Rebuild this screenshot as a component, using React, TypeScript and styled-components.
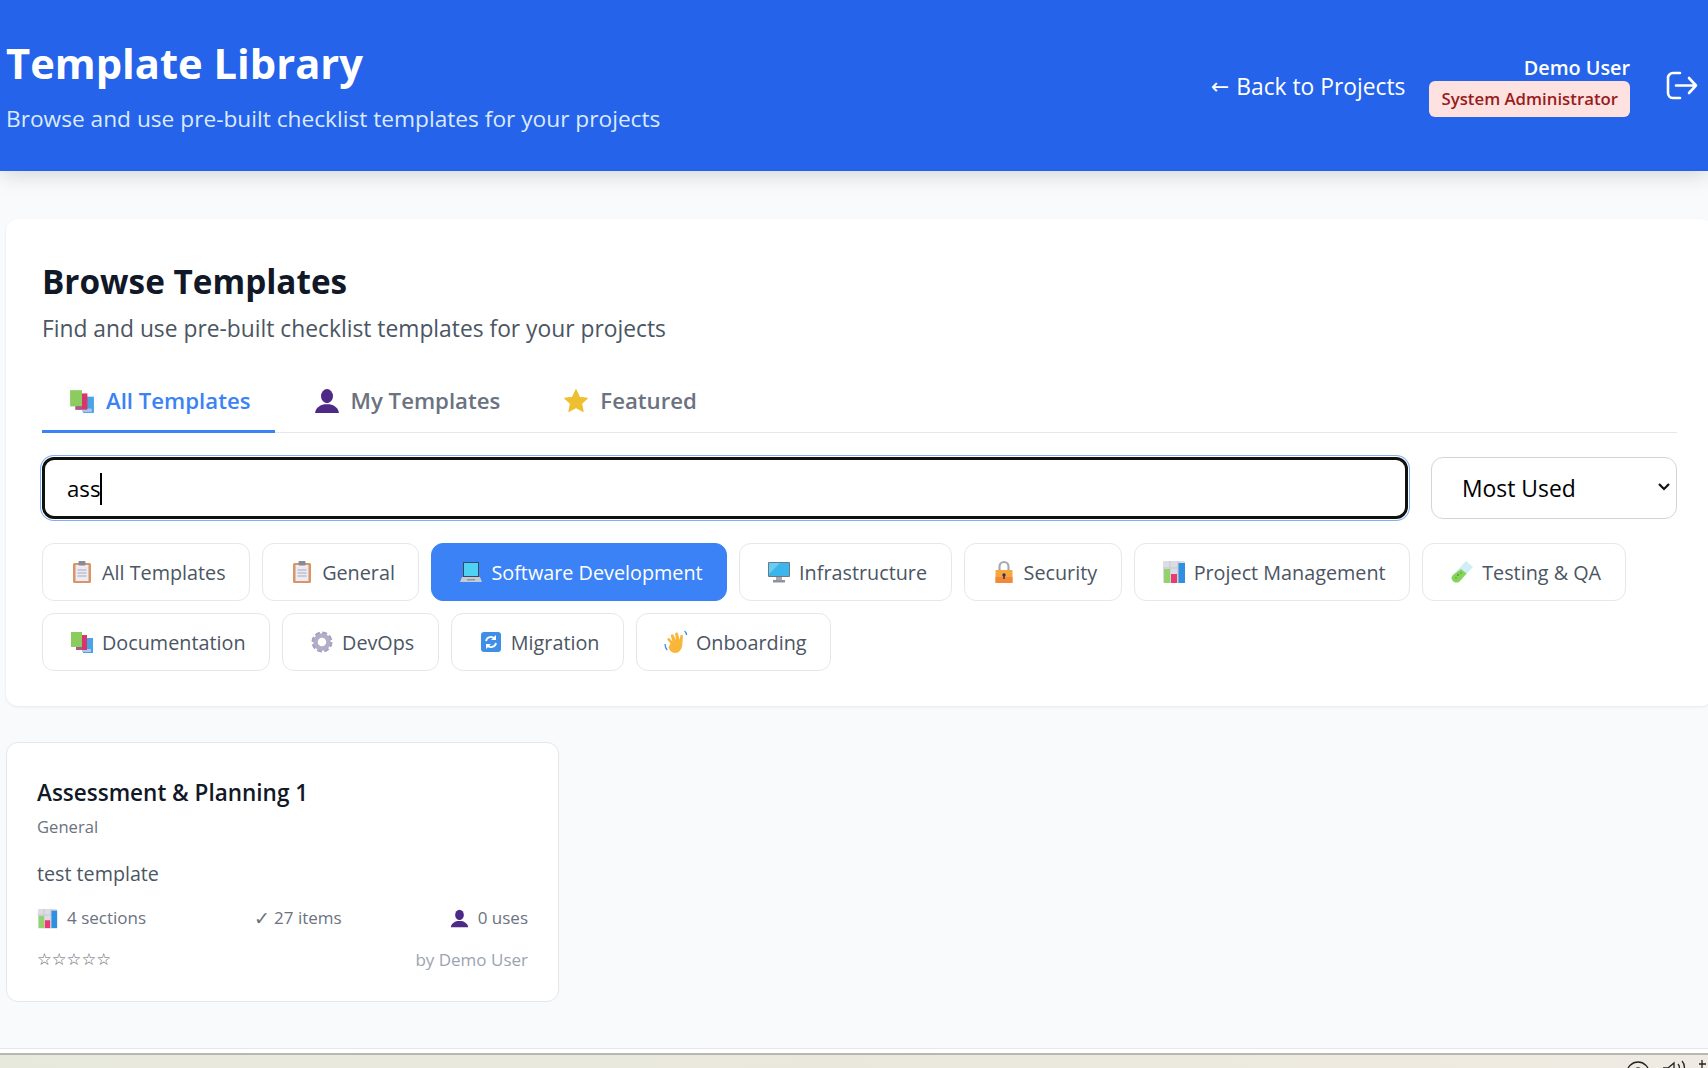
import { createGlobalStyle, styled } from "styled-components";

const sans = `"Open Sans", "Liberation Sans", sans-serif`;

const Global = createGlobalStyle`
  html, body {
    margin: 0;
    padding: 0;
    overflow: hidden;
    background: #f9fafb;
    font-family: ${sans};
  }
  * { box-sizing: border-box; }
`;

type EmojiName =
  | "books"
  | "bust"
  | "star"
  | "clipboard"
  | "laptop"
  | "desktop"
  | "lock"
  | "chart"
  | "tube"
  | "gear"
  | "refresh"
  | "wave";

const Emoji = ({ name, size = 24 }: { name: EmojiName; size?: number }) => {
  const art: Record<EmojiName, React.ReactNode> = {
    books: (
      <>
        <rect x="13" y="8" width="10" height="15" fill="#4aa3e8" />
        <rect x="12" y="19" width="9" height="3" fill="#a9c9ee" />
        <rect x="6" y="5" width="11" height="15" fill="#d9356b" />
        <rect x="1" y="2" width="11" height="15" fill="#8ccb5e" />
        <rect x="6" y="17" width="6" height="3" fill="#a45a8c" />
      </>
    ),
    bust: (
      <>
        <ellipse cx="12" cy="7.500" rx="5.500" ry="6.500" fill="#4c2a85" />
        <path d="M1 23c.5-4.500 4-7 8.500-8h5c4.500 1 8 3.500 8.500 8z" fill="#4c2a85" />
      </>
    ),
    star: (
      <path
        d="M12 1.500l3.200 7 7.300.9-5.400 5 1.500 7.300L12 18l-6.600 3.700 1.500-7.300-5.400-5 7.300-.9z"
        fill="#eebf2f"
        stroke="#eebf2f"
        strokeLinejoin="round"
      />
    ),
    clipboard: (
      <>
        <rect x="3" y="3" width="18" height="20" rx="1.500" fill="#d99566" />
        <rect x="5.500" y="5" width="13" height="16" fill="#eceaf2" />
        <rect x="8.500" y="1" width="7" height="4.500" rx="1" fill="#8a8a94" />
        <path d="M7.500 10h9M7.500 13h9M7.500 16h9" stroke="#a9a9b6" strokeWidth="1" />
      </>
    ),
    laptop: (
      <>
        <rect x="4" y="2" width="16" height="15" fill="#3a4a5c" />
        <rect x="5" y="3" width="14" height="13" fill="#4fd0f5" />
        <path d="M3 17h18l2 5H1z" fill="#c5cad4" />
        <rect x="8" y="19" width="8" height="1.500" fill="#8f95a3" />
      </>
    ),
    desktop: (
      <>
        <rect x="1" y="2" width="22" height="15" rx="1" fill="#6f7785" />
        <path d="M2 3h20v13H2z" fill="#3cb4ec" />
        <path d="M2 3h11L2 14z" fill="#66cdf3" />
        <rect x="9" y="17" width="6" height="3" fill="#a4a9b3" />
        <rect x="6" y="20" width="12" height="2.500" fill="#8e939e" />
      </>
    ),
    lock: (
      <>
        <path d="M7.500 11V6.500a4.500 4.500 0 0 1 9 0V11" fill="none" stroke="#a8a8b0" strokeWidth="2.200" />
        <rect x="3.500" y="10" width="17" height="13" rx="1" fill="#f7a63c" />
        <rect x="3.500" y="17" width="17" height="6" fill="#f08a3c" />
        <circle cx="12" cy="15" r="1.700" fill="#3a3050" />
        <rect x="11.300" y="15" width="1.400" height="4" fill="#3a3050" />
      </>
    ),
    chart: (
      <>
        <rect x="1" y="1" width="22" height="22" rx="1" fill="#dcdce4" />
        <path d="M1 8h22M8 1v22M16 1v22" stroke="#c6c6d0" strokeWidth="1" />
        <rect x="2" y="9" width="6" height="14" fill="#92d36e" />
        <rect x="9" y="14" width="6" height="9" fill="#ea3a72" />
        <rect x="16.500" y="3" width="6.500" height="20" fill="#2f8fe0" />
      </>
    ),
    tube: (
      <>
        <path d="M16 1l7 6L10 21c-2 2-5 2-7 0s-2-4 0-6z" fill="#cfeef5" />
        <path d="M11 9l5.500 4.500L10 21c-2 2-5 2-7 0s-2-4 0-6z" fill="#86d35a" />
        <circle cx="8" cy="15" r="1" fill="#4e9e33" />
        <circle cx="11" cy="13" r=".8" fill="#4e9e33" />
        <circle cx="6" cy="18" r=".8" fill="#4e9e33" />
      </>
    ),
    gear: (
      <>
        <circle
          cx="12"
          cy="12"
          r="8"
          fill="none"
          stroke="#a79fc0"
          strokeWidth="5"
          strokeDasharray="4.200 2.080"
        />
        <circle cx="12" cy="12" r="6.500" fill="none" stroke="#b3acc9" strokeWidth="4.500" />
      </>
    ),
    refresh: (
      <>
        <rect x="2" y="2" width="20" height="20" rx="3" fill="#3f8fe6" />
        <path
          d="M7 11a5 5 0 0 1 9-2M17 13a5 5 0 0 1-9 2"
          fill="none"
          stroke="#fff"
          strokeWidth="1.800"
        />
        <path d="M17 5v5h-5zM7 19v-5h5z" fill="#fff" />
      </>
    ),
    wave: (
      <>
        <path
          d="M6.500 13.500l-2.800-3.300c-1.200-1.600 1-3 2.300-1.500L8.500 11.500 6.800 6c-.5-1.700 1.800-2.600 2.700-.9L12 10l-.8-6c0-1.900 2.500-2 2.900-.2l1.300 6 1-4c.5-1.700 2.700-1.300 2.500.5l-.6 8.700c-.5 4.500-3.300 8-7.300 8-3.300 0-5-2.200-6.500-5.500z"
          fill="#f8b73a"
        />
        <path d="M1 14c0 2.500.6 4.300 2.200 6M20.500 1c1.200 1 2 2.400 2 4" fill="none" stroke="#3f8fe6" strokeWidth="1.300" />
      </>
    ),
  };
  return (
    <svg width={size} height={size} viewBox="0 0 24 24" aria-hidden="true">
      {art[name]}
    </svg>
  );
};

const Page = styled.div`
  display: flex;
  flex-direction: column;
  width: 1708px;
  height: 1068px;
  overflow: hidden;
  background: #f9fafb;
`;

const Header = styled.header`
  flex: none;
  height: 171px;
  display: flex;
  align-items: center;
  justify-content: space-between;
  padding: 0 10px 0 6px;
  background: #2563eb;
  color: #fff;
  box-shadow: 0 4px 20px rgba(0, 0, 0, 0.15);
  position: relative;
`;

const TitleBlock = styled.div`
  display: flex;
  flex-direction: column;
  padding-top: 1px;
`;

const PageTitle = styled.h1`
  margin: 0 0 15px;
  font-size: 41.7px;
  line-height: 50px;
  font-weight: 700;
`;

const PageSubtitle = styled.p`
  margin: 0;
  font-size: 22.7px;
  line-height: 32px;
  color: #dbeafe;
`;

const HeaderRight = styled.div`
  display: flex;
  align-items: center;
`;

const BackLink = styled.a`
  display: flex;
  align-items: center;
  gap: 7px;
  margin-right: 24px;
  padding-top: 2px;
  font-size: 22.8px;
  color: #fff;
`;

const ArrowGlyph = styled.span`
  font-family: "DejaVu Sans", sans-serif;
  font-size: 22px;
`;

const UserInfo = styled.div`
  display: flex;
  flex-direction: column;
  align-items: flex-end;
`;

const UserName = styled.span`
  font-size: 19.8px;
  line-height: 26px;
  font-weight: 600;
`;

const RoleBadge = styled.span`
  padding: 0 12px;
  height: 36px;
  line-height: 36px;
  border-radius: 6px;
  background: #fee2e2;
  color: #991b1b;
  font-size: 16.8px;
  font-weight: 600;
`;

const LogoutButton = styled.button`
  display: flex;
  margin-left: 36px;
  padding: 0;
  border: 0;
  background: none;
  color: #fff;
`;

const Main = styled.main`
  flex: 1;
  padding: 48px 0 0 6px;
`;

const BrowseCard = styled.section`
  width: 1707px;
  height: 487px;
  padding: 36px 36px 0;
  background: #fff;
  border-radius: 12px;
  box-shadow: 0 1px 3px rgba(0, 0, 0, 0.08);
`;

const BrowseTitle = styled.h2`
  margin: 0;
  font-size: 33.3px;
  line-height: 52px;
  font-weight: 700;
  color: #111827;
`;

const BrowseSubtitle = styled.p`
  margin: 0;
  font-size: 22.8px;
  line-height: 44px;
  color: #4b5563;
`;

const Tabs = styled.nav`
  display: flex;
  gap: 12px;
  margin-top: 22px;
  border-bottom: 1px solid #e5e7eb;
`;

const Tab = styled.button<{ $active?: boolean }>`
  display: flex;
  align-items: center;
  gap: 11px;
  height: 60px;
  margin-bottom: -1px;
  padding: 0 24px 2px 27px;
  border: 0;
  border-bottom: 3px solid ${(p) => (p.$active ? "#3b82f6" : "transparent")};
  background: none;
  font-family: inherit;
  font-size: 22.2px;
  font-weight: 600;
  color: ${(p) => (p.$active ? "#3b82f6" : "#6b7280")};
`;

const SearchRow = styled.div`
  display: flex;
  gap: 23px;
  margin-top: 24px;
`;

const SearchBox = styled.div`
  flex: 1;
  display: flex;
  align-items: center;
  height: 62px;
  padding: 1px 22px 0;
  background: #fff;
  border: 3px solid #101010;
  border-radius: 12px;
  box-shadow: 0 0 0 1px #fff, 0 0 0 2px #7fb0f5;
  font-size: 22.2px;
  color: #000;
`;

const Caret = styled.span`
  width: 2px;
  height: 32px;
  background: #000;
`;

const SortWrap = styled.div`
  position: relative;
  width: 246px;
  height: 62px;
`;

const SortSelect = styled.select`
  width: 100%;
  height: 100%;
  padding: 1px 26px 0 30px;
  appearance: none;
  background: #fff;
  border: 1.5px solid #d1d5db;
  border-radius: 12px;
  font-family: inherit;
  font-size: 22.9px;
  color: #000;
`;

const SortChevron = styled.svg`
  position: absolute;
  right: 6px;
  top: 25px;
  pointer-events: none;
`;

const Pills = styled.div`
  display: flex;
  flex-wrap: wrap;
  gap: 12px;
  margin-top: 24px;
`;

const Pill = styled.button<{ $active?: boolean }>`
  display: flex;
  align-items: center;
  gap: 8px;
  height: 58px;
  padding: 0 23.5px 0 27px;
  border: 1.5px solid ${(p) => (p.$active ? "#3b82f6" : "#e5e7eb")};
  border-radius: 12px;
  background: ${(p) => (p.$active ? "#3b82f6" : "#fff")};
  font-family: inherit;
  font-size: 19.8px;
  color: ${(p) => (p.$active ? "#fff" : "#4b5563")};
`;

const TemplateCard = styled.article`
  width: 553px;
  height: 260px;
  margin-top: 36px;
  padding: 34px 30px 0;
  background: #fff;
  border: 1.5px solid #e5e7eb;
  border-radius: 12px;
`;

const CardTitle = styled.h3`
  margin: 0;
  font-size: 22.5px;
  line-height: 32px;
  font-weight: 600;
  color: #111827;
`;

const CardCategory = styled.div`
  margin-top: 5px;
  font-size: 16.6px;
  line-height: 26px;
  color: #6b7280;
`;

const CardDescription = styled.p`
  margin: 19px 0 0;
  font-size: 19.7px;
  line-height: 30px;
  color: #4b5563;
`;

const CardStats = styled.div`
  display: flex;
  justify-content: space-between;
  margin-top: 15px;
  font-size: 17px;
  line-height: 28px;
  color: #6b7280;
`;

const Stat = styled.span`
  display: flex;
  align-items: center;
  gap: 9px;
`;

const CheckGlyph = styled.span`
  font-family: "DejaVu Sans", sans-serif;
  font-size: 19px;
  margin-right: -5px;
`;

const CardFooter = styled.div`
  display: flex;
  justify-content: space-between;
  align-items: center;
  margin-top: 14px;
`;

const Stars = styled.span`
  font-family: "DejaVu Sans", sans-serif;
  font-size: 16.5px;
  line-height: 28px;
  color: #5f6670;
`;

const Author = styled.span`
  font-size: 17px;
  line-height: 28px;
  color: #9ca3af;
`;

const BottomEdge = styled.div`
  flex: none;
  height: 5px;
  background: #fff;
  border-top: 1px solid #e5e7eb;
`;

const Taskbar = styled.footer`
  flex: none;
  height: 15px;
  display: flex;
  justify-content: flex-end;
  border-top: 2px solid #b8b8b0;
  background: linear-gradient(90deg, #e8e9dd, #eae8dc 50%, #f0ebe2);
  overflow: hidden;
`;

const categories: { icon: EmojiName; label: string; active?: boolean }[] = [
  { icon: "clipboard", label: "All Templates" },
  { icon: "clipboard", label: "General" },
  { icon: "laptop", label: "Software Development", active: true },
  { icon: "desktop", label: "Infrastructure" },
  { icon: "lock", label: "Security" },
  { icon: "chart", label: "Project Management" },
  { icon: "tube", label: "Testing & QA" },
  { icon: "books", label: "Documentation" },
  { icon: "gear", label: "DevOps" },
  { icon: "refresh", label: "Migration" },
  { icon: "wave", label: "Onboarding" },
];

const App = () => {
  return (
    <Page>
      <Global />
      <Header>
        <TitleBlock>
          <PageTitle>Template Library</PageTitle>
          <PageSubtitle>Browse and use pre-built checklist templates for your projects</PageSubtitle>
        </TitleBlock>
        <HeaderRight>
          <BackLink>
            <ArrowGlyph>←</ArrowGlyph>
            Back to Projects
          </BackLink>
          <UserInfo>
            <UserName>Demo User</UserName>
            <RoleBadge>System Administrator</RoleBadge>
          </UserInfo>
          <LogoutButton aria-label="Log out">
            <svg width="32" height="30" viewBox="0 0 32 30" fill="none" stroke="currentColor" strokeWidth="2.600" strokeLinecap="round" strokeLinejoin="round">
              <path d="M14 2H7a5 5 0 0 0-5 5v15a5 5 0 0 0 5 5h7" />
              <path d="M10 14.500h20M23 7l7 7.500-7 7.500" />
            </svg>
          </LogoutButton>
        </HeaderRight>
      </Header>
      <Main>
        <BrowseCard>
          <BrowseTitle>Browse Templates</BrowseTitle>
          <BrowseSubtitle>Find and use pre-built checklist templates for your projects</BrowseSubtitle>
          <Tabs>
            <Tab $active>
              <Emoji name="books" size={26} />
              All Templates
            </Tab>
            <Tab>
              <Emoji name="bust" size={26} />
              My Templates
            </Tab>
            <Tab>
              <Emoji name="star" size={26} />
              Featured
            </Tab>
          </Tabs>
          <SearchRow>
            <SearchBox>
              ass
              <Caret />
            </SearchBox>
            <SortWrap>
              <SortSelect defaultValue="used">
                <option value="used">Most Used</option>
                <option value="new">Newest</option>
              </SortSelect>
              <SortChevron width="14" height="10" viewBox="0 0 14 10" fill="none" stroke="#111" strokeWidth="2.200">
                <path d="M2 2l5 5 5-5" />
              </SortChevron>
            </SortWrap>
          </SearchRow>
          <Pills>
            {categories.map((c) => (
              <Pill key={c.label} $active={c.active}>
                <Emoji name={c.icon} size={24} />
                {c.label}
              </Pill>
            ))}
          </Pills>
        </BrowseCard>
        <TemplateCard>
          <CardTitle>Assessment &amp; Planning 1</CardTitle>
          <CardCategory>General</CardCategory>
          <CardDescription>test template</CardDescription>
          <CardStats>
            <Stat>
              <Emoji name="chart" size={21} />4 sections
            </Stat>
            <Stat>
              <CheckGlyph>✓</CheckGlyph>27 items
            </Stat>
            <Stat>
              <Emoji name="bust" size={19} />0 uses
            </Stat>
          </CardStats>
          <CardFooter>
            <Stars>☆☆☆☆☆</Stars>
            <Author>by Demo User</Author>
          </CardFooter>
        </TemplateCard>
      </Main>
      <BottomEdge />
      <Taskbar>
        <svg width="100" height="13" viewBox="0 0 100 13" fill="none" stroke="#222" strokeWidth="1.300">
          <circle cx="30" cy="18" r="11" />
          <circle cx="30" cy="18" r="5" />
          <path d="M55 13h5l6-5v5M70 9c1 1 1.500 2.500 1.500 4M74 6c2 2 2.500 4 2.500 7" />
          <path d="M94 5v8M91 9h7" />
        </svg>
      </Taskbar>
    </Page>
  );
};

export default App;
